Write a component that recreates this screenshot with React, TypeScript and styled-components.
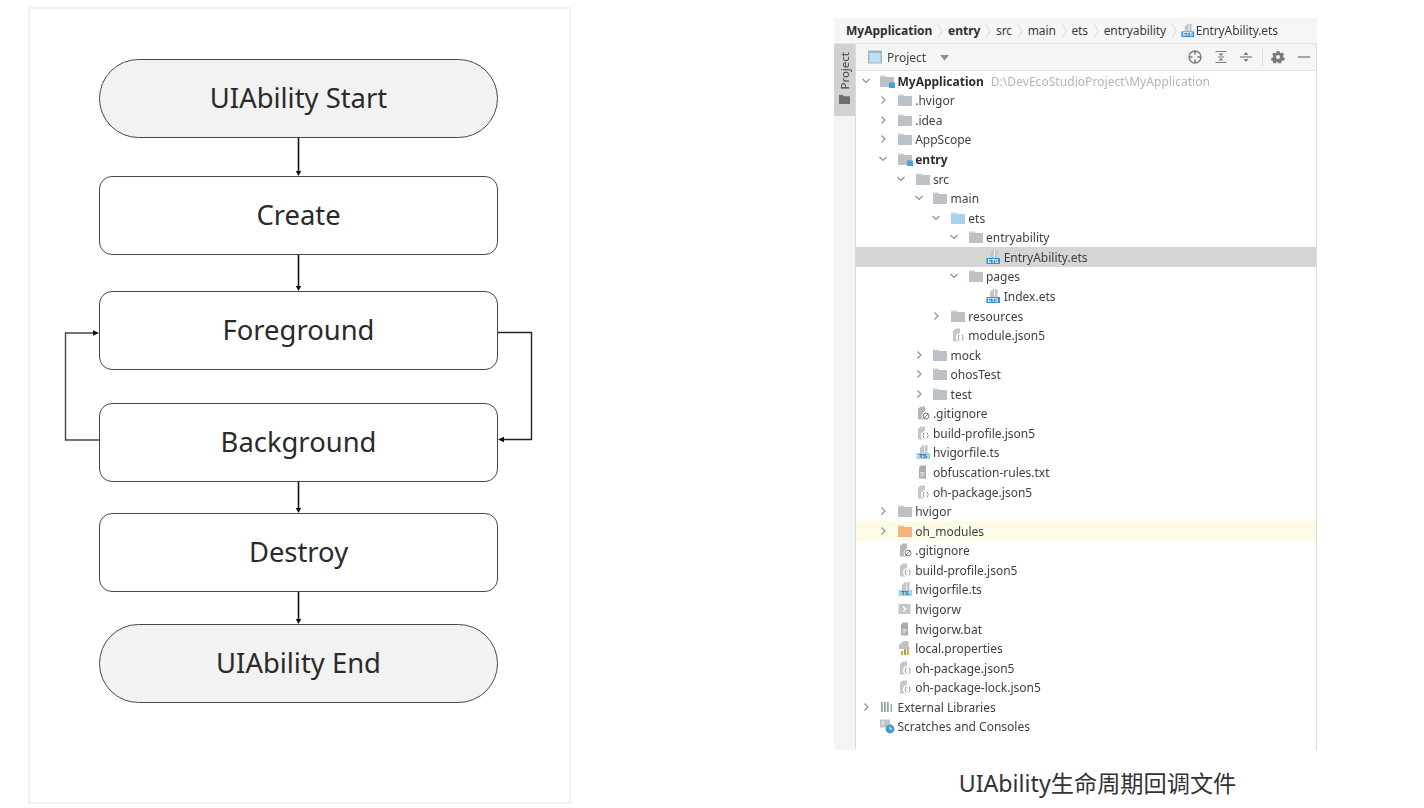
import React from 'react';
import styled, { createGlobalStyle } from 'styled-components';

const Global = createGlobalStyle`
  html, body { margin: 0; padding: 0; background: #fff; }
  body { width: 1424px; height: 808px; overflow: hidden; font-family: "Noto Sans", "Noto Sans CJK SC", sans-serif; }
`;

const Page = styled.div`
  display: flex;
  align-items: flex-start;
  width: 1424px;
  height: 808px;
  padding: 7px 0 0 28px;
  box-sizing: border-box;
`;

const Figure = styled.section`
  width: 543px;
  height: 797px;
  box-sizing: border-box;
  border: 2px solid #eef2f7;
  padding: 50px 0 0 69px;
`;

const Diagram = styled.div`
  position: relative;
  width: 399px;
  display: flex;
  flex-direction: column;
`;

const Node = styled.div<{ $pill?: boolean }>`
  width: 399px;
  height: 79px;
  box-sizing: border-box;
  display: flex;
  align-items: center;
  justify-content: center;
  border: 1.5px solid #484848;
  border-radius: ${p => (p.$pill ? '39.5px' : '13px')};
  background: ${p => (p.$pill ? '#f2f2f2' : '#fff')};
  color: #2a2a2a;
  font-size: 27.4px;
  padding-bottom: 3px;
`;

const Gap = styled.div<{ $h: number }>`
  height: ${p => p.$h}px;
  display: flex;
  justify-content: center;
`;

const LoopOverlay = styled.svg`
  position: absolute;
  left: -40px;
  top: 0;
`;

const Side = styled.section`
  width: 483px;
  margin-left: 263px;
  margin-top: 11px;
  display: flex;
  flex-direction: column;
  align-items: stretch;
`;

const Ide = styled.div`
  height: 732px;
  display: flex;
  flex-direction: column;
  color: #3b3b3b;
  font-size: 12px;
  filter: blur(0.25px);
`;

const Crumbs = styled.div`
  height: 26px;
  flex: none;
  display: flex;
  align-items: center;
  padding-left: 12px;
  background: #f6f6f6;
  border-bottom: 1px solid #e6e6e6;
  box-sizing: border-box;
`;

const Crumb = styled.span<{ $bold?: boolean }>`
  font-weight: ${p => (p.$bold ? 700 : 400)};
  color: ${p => (p.$bold ? '#2f2f2f' : '#3b3b3b')};
  letter-spacing: ${p => (p.$bold ? '0' : '-0.1px')};
`;

const CrumbSep = styled.svg`
  width: 15.7px;
  height: 20px;
  flex: none;
`;

const CrumbIcon = styled.svg`
  width: 15px;
  height: 15px;
  flex: none;
  margin: 0 1px 0 -2px;
`;

const Body = styled.div`
  flex: 1;
  display: flex;
  min-height: 0;
`;

const Rail = styled.div`
  width: 21px;
  flex: none;
  background: #f4f4f4;
  border-right: 1px solid #dcdcdc;
`;

const RailTab = styled.div`
  height: 72px;
  background: #d2d2d2;
  display: flex;
  flex-direction: column;
  align-items: center;
  padding-top: 8px;
  box-sizing: border-box;
  gap: 4px;
`;

const RailLabel = styled.span`
  writing-mode: vertical-rl;
  transform: rotate(180deg);
  font-size: 11.5px;
  line-height: 14px;
  color: #444;
`;

const Main = styled.div`
  flex: 1;
  min-width: 0;
  display: flex;
  flex-direction: column;
  border-right: 1px solid #dedede;
`;

const Toolbar = styled.div`
  height: 27px;
  flex: none;
  display: flex;
  align-items: center;
  background: #f4f5f5;
  border-bottom: 1px solid #e4e4e4;
  box-sizing: border-box;
  padding: 0 6px 0 12px;
`;

const ToolTitle = styled.span`
  margin-left: 5px;
  color: #444;
`;

const Spacer = styled.div`
  flex: 1;
`;

const ToolSvg = styled.svg<{ $ml?: number }>`
  flex: none;
  margin-left: ${p => p.$ml ?? 0}px;
`;

const Divider = styled.div`
  width: 1px;
  height: 18px;
  background: #dcdcdc;
  margin: 0 8px;
`;

const Tree = styled.div`
  display: flex;
  flex-direction: column;
`;

const Row = styled.div<{ $level: number; $tone?: 'sel' | 'warn' }>`
  height: 19.57px;
  display: flex;
  align-items: center;
  padding-left: ${p => 0.5 + p.$level * 17.7}px;
  background: ${p => (p.$tone === 'sel' ? '#d5d5d5' : p.$tone === 'warn' ? '#fdfbe8' : 'transparent')};
  white-space: nowrap;
`;

const ChevSlot = styled.svg`
  width: 18px;
  height: 14px;
  flex: none;
`;

const IconSlot = styled.svg`
  width: 16px;
  height: 16px;
  margin: 0 2.2px 0 4.8px;
  flex: none;
`;

const Label = styled.span<{ $bold?: boolean }>`
  padding-top: 1px;
  font-weight: ${p => (p.$bold ? 700 : 400)};
  color: ${p => (p.$bold ? '#2c2c2c' : '#3f3f3f')};
`;

const Hint = styled.span`
  margin-left: 7px;
  padding-top: 1px;
  color: #b4b4b4;
  letter-spacing: 0.05px;
`;

const Caption = styled.div`
  margin-top: 18px;
  padding-left: 44px;
  text-align: center;
  font-size: 23.2px;
  line-height: 30px;
  color: #333;
`;

type Kind = 'folder' | 'module' | 'blue' | 'orange' | 'json' | 'ignore' | 'ets' | 'ts' | 'txt' | 'shell' | 'props' | 'libs' | 'scratch';

const FolderShape = ({ c }: { c: string }) => (
  <>
    <path d="M1 2.500h5.500l1.200 1.500H1z" fill={c} opacity=".75" />
    <path d="M1 4h14v10H1z" fill={c} />
  </>
);

const FileGlyph = ({ kind }: { kind: Kind }) => {
  switch (kind) {
    case 'folder':
      return <FolderShape c="#bcc1c7" />;
    case 'blue':
      return <FolderShape c="#a5d2ec" />;
    case 'orange':
      return <FolderShape c="#f4b27c" />;
    case 'module':
      return (
        <>
          <FolderShape c="#bcc1c7" />
          <rect x="10" y="9.500" width="6" height="5.500" fill="#4c9fd2" />
        </>
      );
    case 'json':
      return (
        <>
          <path d="M5.500 1.500H10v13H3V4z" fill="#c4c7cb" />
          <circle cx="10.500" cy="10.500" r="4.600" fill="#fff" />
          <path d="M9.400 7.600c-1 0-.6 2.200-1.400 2.900.8.7.4 2.900 1.400 2.900M11.800 7.600c1 0 .6 2.200 1.400 2.900-.8.7-.4 2.900-1.400 2.900" fill="none" stroke="#7e8287" strokeWidth=".9" />
        </>
      );
    case 'ignore':
      return (
        <>
          <path d="M5.500 1.500H10v13H3V4z" fill="#b4b8bd" />
          <circle cx="11" cy="11" r="4.400" fill="#fff" />
          <circle cx="11" cy="11" r="3" fill="none" stroke="#777b80" strokeWidth="1" />
          <path d="M9 13l4-4" stroke="#777b80" strokeWidth="1" />
        </>
      );
    case 'ets':
    case 'ts':
      return (
        <>
          <path d="M8 1h4.500v8H5V4z" fill="#c2c6cb" />
          <path d="M9.500 1v8" stroke="#fff" strokeWidth=".7" />
          <rect x="1.500" y="9" width="13.500" height="6" fill={kind === 'ets' ? '#3d8fc4' : '#a5d2ec'} />
          <text x="8.200" y="14.300" textAnchor="middle" fontFamily="Liberation Sans, sans-serif" fontWeight="700" fontSize={kind === 'ets' ? 5.500 : 6} fill={kind === 'ets' ? '#fff' : '#2f5f7f'}>
            {kind === 'ets' ? 'ETS' : 'TS'}
          </text>
        </>
      );
    case 'txt':
      return (
        <>
          <path d="M6 1.500h5v13H4V3.500z" fill="#a9adb2" />
          <path d="M5.500 8.500h4M5.500 10.200h4M5.500 12h2.800" stroke="#eef0f2" strokeWidth=".9" />
        </>
      );
    case 'shell':
      return (
        <>
          <rect x="1.500" y="3" width="12" height="10" fill="#c3c7cb" />
          <path d="M6 5.500l2.700 2.500L6 10.500" fill="none" stroke="#fff" strokeWidth="1.400" />
        </>
      );
    case 'props':
      return (
        <>
          <path d="M6.500 1h5v9H2V5z" fill="#bfc3c8" />
          <rect x="1" y="9" width="14" height="6" fill="#fff" />
          <rect x="4" y="11" width="2" height="4" fill="#e6a23c" />
          <rect x="7" y="9" width="2" height="6" fill="#8cae4a" />
          <rect x="10" y="7" width="2" height="8" fill="#e0b23c" />
        </>
      );
    case 'libs':
      return (
        <>
          <rect x="2" y="3" width="1.700" height="10" fill="#8aa38c" />
          <rect x="5" y="3" width="1.700" height="10" fill="#8f9aa5" />
          <rect x="8" y="3" width="1.700" height="10" fill="#7ca8c4" />
          <rect x="11.500" y="5" width="1.500" height="8" fill="#a8adb2" />
        </>
      );
    case 'scratch':
      return (
        <>
          <path d="M1 1.500h10v8H1z" fill="#bfc3c8" />
          <path d="M3 3.500l2 1.700-2 1.700" fill="none" stroke="#fff" strokeWidth="1" />
          <circle cx="11" cy="11" r="4.400" fill="#3f97d0" />
          <path d="M11 8.600V11h2" fill="none" stroke="#fff" strokeWidth="1" />
        </>
      );
  }
};

const FileIcon = ({ kind }: { kind: Kind }) => (
  <IconSlot viewBox="0 0 16 16">
    <FileGlyph kind={kind} />
  </IconSlot>
);

const Chevron = ({ state }: { state?: 'open' | 'closed' }) => (
  <ChevSlot viewBox="0 0 18 14">
    {state === 'open' && <path d="M5.500 5l3.500 3.500L12.500 5" fill="none" stroke="#8c8c8c" strokeWidth="1.100" />}
    {state === 'closed' && <path d="M7.500 3.500L11 7l-3.500 3.500" fill="none" stroke="#8c8c8c" strokeWidth="1.100" />}
  </ChevSlot>
);

interface Item {
  level: number;
  name: string;
  kind: Kind;
  chev?: 'open' | 'closed';
  bold?: boolean;
  hint?: string;
  tone?: 'sel' | 'warn';
}

const items: Item[] = [
  { level: 0, name: 'MyApplication', kind: 'module', chev: 'open', bold: true, hint: 'D:\\DevEcoStudioProject\\MyApplication' },
  { level: 1, name: '.hvigor', kind: 'folder', chev: 'closed' },
  { level: 1, name: '.idea', kind: 'folder', chev: 'closed' },
  { level: 1, name: 'AppScope', kind: 'folder', chev: 'closed' },
  { level: 1, name: 'entry', kind: 'module', chev: 'open', bold: true },
  { level: 2, name: 'src', kind: 'folder', chev: 'open' },
  { level: 3, name: 'main', kind: 'folder', chev: 'open' },
  { level: 4, name: 'ets', kind: 'blue', chev: 'open' },
  { level: 5, name: 'entryability', kind: 'folder', chev: 'open' },
  { level: 6, name: 'EntryAbility.ets', kind: 'ets', tone: 'sel' },
  { level: 5, name: 'pages', kind: 'folder', chev: 'open' },
  { level: 6, name: 'Index.ets', kind: 'ets' },
  { level: 4, name: 'resources', kind: 'folder', chev: 'closed' },
  { level: 4, name: 'module.json5', kind: 'json' },
  { level: 3, name: 'mock', kind: 'folder', chev: 'closed' },
  { level: 3, name: 'ohosTest', kind: 'folder', chev: 'closed' },
  { level: 3, name: 'test', kind: 'folder', chev: 'closed' },
  { level: 2, name: '.gitignore', kind: 'ignore' },
  { level: 2, name: 'build-profile.json5', kind: 'json' },
  { level: 2, name: 'hvigorfile.ts', kind: 'ts' },
  { level: 2, name: 'obfuscation-rules.txt', kind: 'txt' },
  { level: 2, name: 'oh-package.json5', kind: 'json' },
  { level: 1, name: 'hvigor', kind: 'folder', chev: 'closed' },
  { level: 1, name: 'oh_modules', kind: 'orange', chev: 'closed', tone: 'warn' },
  { level: 1, name: '.gitignore', kind: 'ignore' },
  { level: 1, name: 'build-profile.json5', kind: 'json' },
  { level: 1, name: 'hvigorfile.ts', kind: 'ts' },
  { level: 1, name: 'hvigorw', kind: 'shell' },
  { level: 1, name: 'hvigorw.bat', kind: 'txt' },
  { level: 1, name: 'local.properties', kind: 'props' },
  { level: 1, name: 'oh-package.json5', kind: 'json' },
  { level: 1, name: 'oh-package-lock.json5', kind: 'json' },
  { level: 0, name: 'External Libraries', kind: 'libs', chev: 'closed' },
  { level: 0, name: 'Scratches and Consoles', kind: 'scratch' },
];

const ArrowGap = ({ h }: { h: number }) => (
  <Gap $h={h}>
    <svg width="9" height={h} viewBox={`0 0 9 ${h}`}>
      <path d={`M4.500 0V${h - 3}`} stroke="#111" strokeWidth="1.600" />
      <path d={`M1.800 ${h - 5}h5.400L4.500 ${h}z`} fill="#111" />
    </svg>
  </Gap>
);

const Sep = () => (
  <CrumbSep viewBox="0 0 16 20">
    <path d="M6 3l4.500 7L6 17" fill="none" stroke="#d8d8d8" strokeWidth="1" />
  </CrumbSep>
);

const crumbs = [
  { t: 'MyApplication', b: true },
  { t: 'entry', b: true },
  { t: 'src' },
  { t: 'main' },
  { t: 'ets' },
  { t: 'entryability' },
];

export default function App() {
  return (
    <Page>
      <Global />
      <Figure>
        <Diagram>
          <Node $pill>UIAbility Start</Node>
          <ArrowGap h={38} />
          <Node>Create</Node>
          <ArrowGap h={36} />
          <Node>Foreground</Node>
          <Gap $h={33} />
          <Node>Background</Node>
          <ArrowGap h={31} />
          <Node>Destroy</Node>
          <ArrowGap h={32} />
          <Node $pill>UIAbility End</Node>
          <LoopOverlay width="480" height="645" viewBox="0 0 480 645">
            <path d="M40 381H6.500V274H36" fill="none" stroke="#444" strokeWidth="1.400" />
            <path d="M34 271.200v5.600L40 274z" fill="#111" />
            <path d="M439 273.500H472.500V380.500H443" fill="none" stroke="#222" strokeWidth="1.400" />
            <path d="M445 377.700v5.600L439 380.500z" fill="#111" />
          </LoopOverlay>
        </Diagram>
      </Figure>
      <Side>
        <Ide>
          <Crumbs>
            {crumbs.map(c => (
              <React.Fragment key={c.t}>
                <Crumb $bold={c.b}>{c.t}</Crumb>
                <Sep />
              </React.Fragment>
            ))}
            <CrumbIcon viewBox="0 0 16 16">
              <FileGlyph kind="ets" />
            </CrumbIcon>
            <Crumb>EntryAbility.ets</Crumb>
          </Crumbs>
          <Body>
            <Rail>
              <RailTab>
                <RailLabel>Project</RailLabel>
                <svg width="11" height="10" viewBox="0 0 11 10">
                  <path d="M0 1h4l1 1.300h6V10H0z" fill="#6f6f6f" />
                </svg>
              </RailTab>
            </Rail>
            <Main>
              <Toolbar>
                <svg width="14" height="14" viewBox="0 0 14 14">
                  <rect x="0" y="0.500" width="14" height="13" fill="#a9b4bc" />
                  <rect x="1.500" y="3" width="11" height="9.500" fill="#bfe0f2" />
                </svg>
                <ToolTitle>Project</ToolTitle>
                <ToolSvg $ml={13} width="11" height="7" viewBox="0 0 11 7">
                  <path d="M1 1h9L5.500 6.500z" fill="#8d8d8d" />
                </ToolSvg>
                <Spacer />
                <ToolSvg width="16" height="16" viewBox="0 0 16 16">
                  <circle cx="8" cy="8" r="6" fill="none" stroke="#7a7a7a" strokeWidth="1.300" />
                  <path d="M8 2v3.500M8 10.500V14M2 8h3.500M10.500 8H14" stroke="#7a7a7a" strokeWidth="1.500" />
                </ToolSvg>
                <ToolSvg $ml={10} width="16" height="16" viewBox="0 0 16 16">
                  <path d="M2.500 2.500h11M2.500 13.500h11M5 8h6" stroke="#7a7a7a" strokeWidth="1.200" />
                  <path d="M5.500 4.500h5L8 7zM5.500 11.500h5L8 9z" fill="#7a7a7a" />
                </ToolSvg>
                <ToolSvg $ml={9} width="16" height="16" viewBox="0 0 16 16">
                  <path d="M2 8h12" stroke="#7a7a7a" strokeWidth="1.200" />
                  <path d="M5.500 6h5L8 3zM5.500 10h5L8 13z" fill="#7a7a7a" />
                </ToolSvg>
                <Divider />
                <ToolSvg width="14" height="14" viewBox="0 0 14 14">
                  <path d="M5.600 1h2.800l.4 1.700 1.300.6 1.500-.9 1.600 2-1.100 1.400.2 1.400 1.500.8-.7 2.500-1.700-.1-1 1-.1 1.700-2.500.5-.9-1.500h-1.400l-.9 1.500-2.500-.5-.1-1.700-1-1-1.700.1L.6 8l1.500-.8.2-1.400L1.200 4.400l1.600-2 1.500.9 1.300-.6z" fill="#7a7a7a" />
                  <circle cx="7" cy="7" r="2" fill="#f4f5f5" />
                </ToolSvg>
                <ToolSvg $ml={13} width="12" height="12" viewBox="0 0 12 12">
                  <path d="M0 6h12" stroke="#808080" strokeWidth="1.400" />
                </ToolSvg>
              </Toolbar>
              <Tree>
                {items.map((it, i) => (
                  <Row key={i} $level={it.level} $tone={it.tone}>
                    <Chevron state={it.chev} />
                    <FileIcon kind={it.kind} />
                    <Label $bold={it.bold}>{it.name}</Label>
                    {it.hint && <Hint>{it.hint}</Hint>}
                  </Row>
                ))}
              </Tree>
            </Main>
          </Body>
        </Ide>
        <Caption>UIAbility生命周期回调文件</Caption>
      </Side>
    </Page>
  );
}
